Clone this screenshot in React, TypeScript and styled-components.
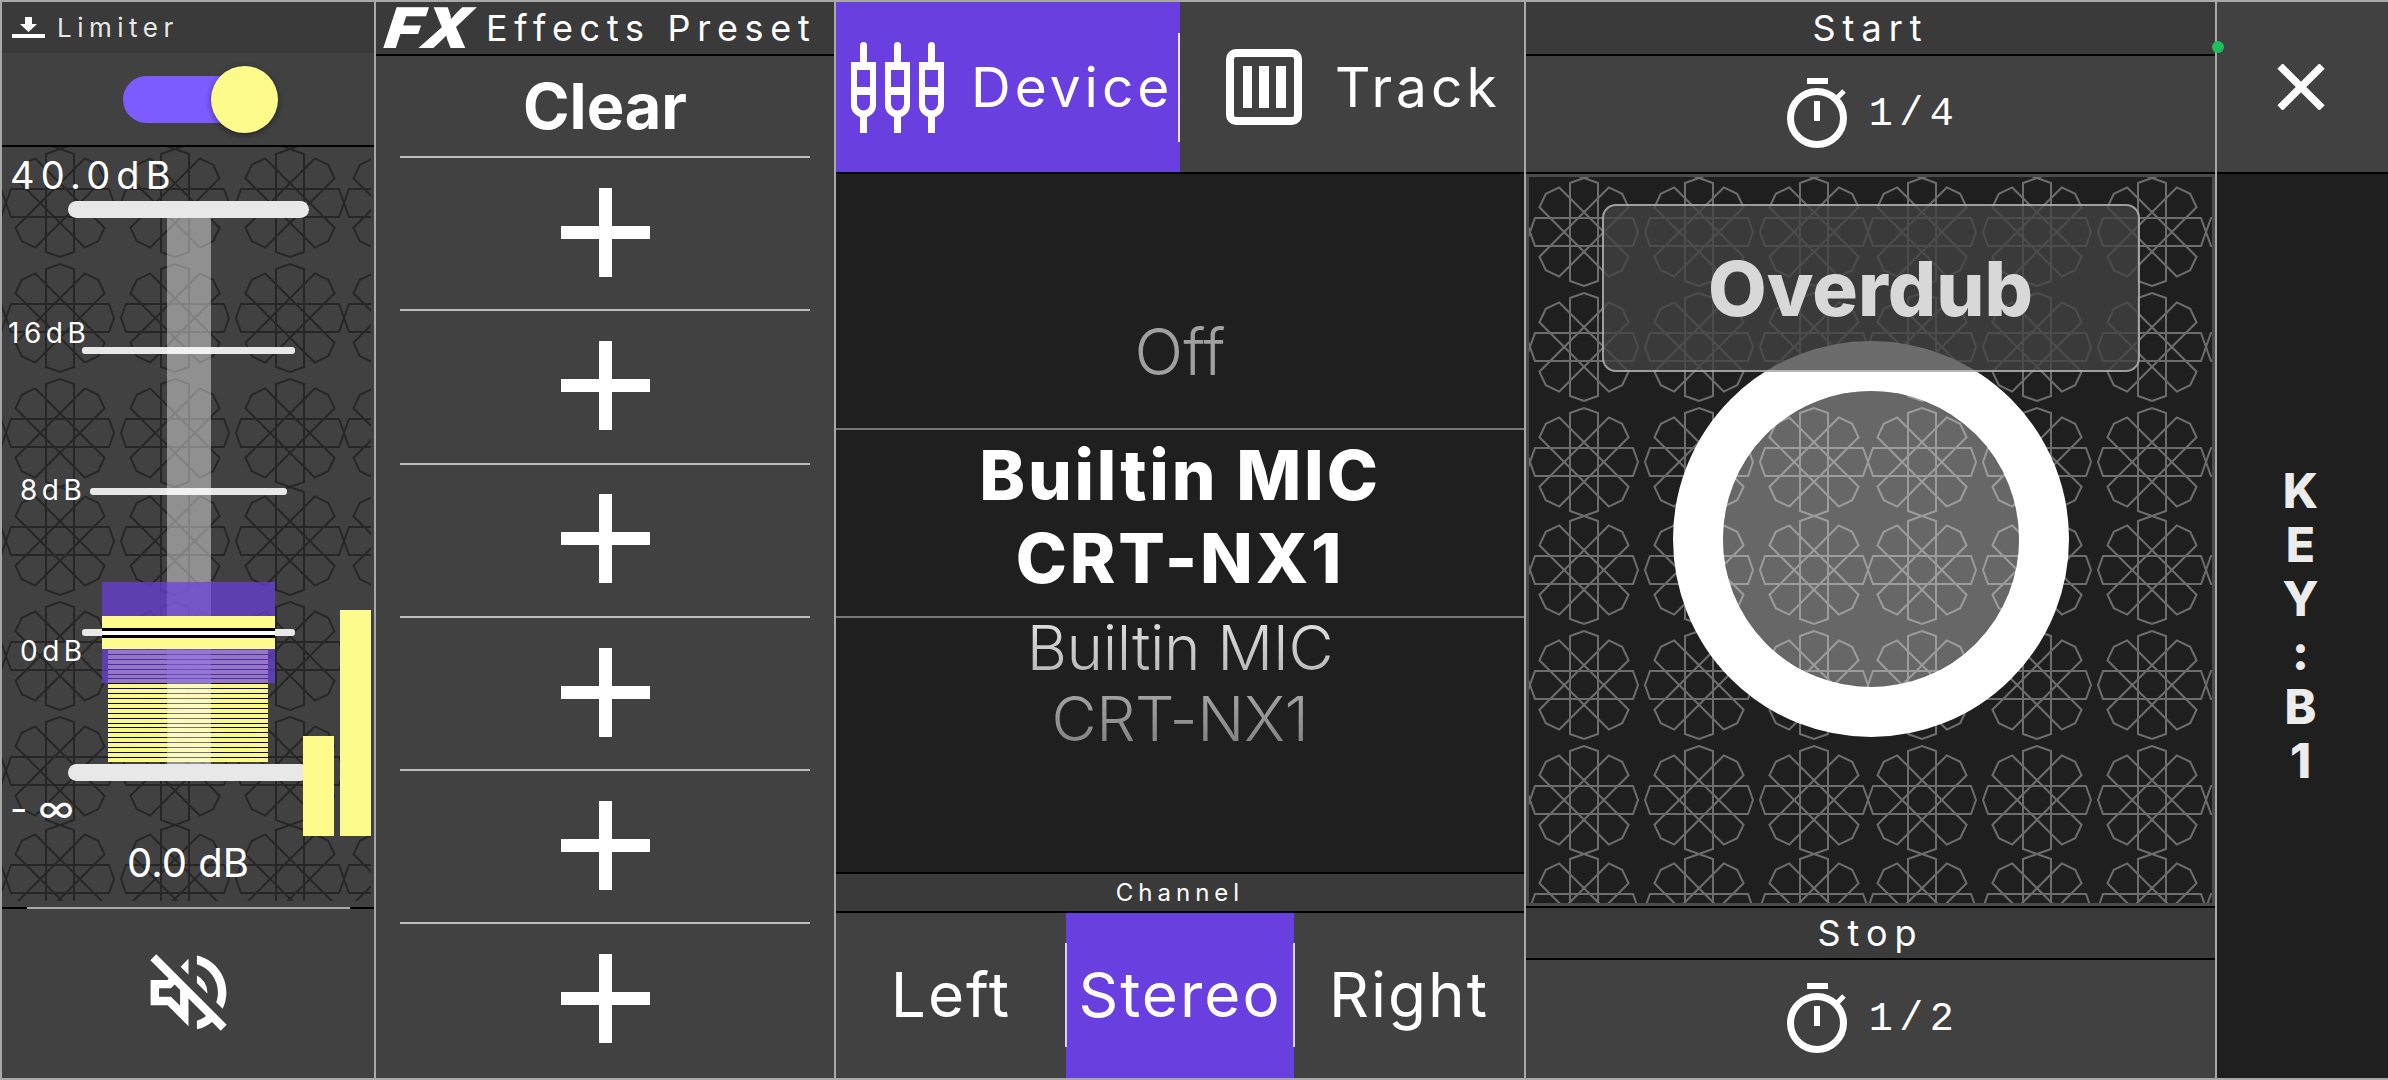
import React from 'react';
import styled, { createGlobalStyle } from 'styled-components';
import { MdOutlineVolumeOff } from 'react-icons/md';

const colors = {
  panel: '#414141',
  header: '#3a3a3a',
  dark: '#1f1f1f',
  rule: '#000',
  edge: '#a8a8a8',
  purple: '#693fe0',
  yellow: '#fdfb8c',
  white: '#fff',
};

// girih tile: flowers sit 115px apart, with a 108px step over the seam
const flowerBar = 'M-14-49L0-54L14-49L14 49L0 54L-14 49Z';
const tileOffsets = [54, 169, 284];

const girih = (stroke: string) => {
  const flower = [0, 45, 90, 135]
    .map((r) => `<path d="${flowerBar}" transform="rotate(${r})"/>`)
    .join('');
  const flowers = tileOffsets
    .flatMap((x) =>
      tileOffsets.map((y) => `<g transform="translate(${x} ${y})">${flower}</g>`)
    )
    .join('');
  const svg = `<svg xmlns="http://www.w3.org/2000/svg" width="338" height="338" fill="none" stroke="${stroke}" stroke-width="2">${flowers}</svg>`;
  return `url("data:image/svg+xml,${encodeURIComponent(svg)}")`;
};

const GlobalStyle = createGlobalStyle`
  html, body {
    margin: 0;
    padding: 0;
    overflow: hidden;
    background: ${colors.edge};
  }
  * {
    box-sizing: border-box;
  }
`;

const Screen = styled.div`
  position: relative;
  width: 2388px;
  height: 1080px;
  padding: 2px 0 2px 2px;
  display: grid;
  grid-template-columns: 372px 458px 688px 689px 171px;
  column-gap: 2px;
  background: ${colors.edge};
  color: ${colors.white};
  font-family: Inter, 'Liberation Sans', sans-serif;
  overflow: hidden;
`;

const Column = styled.section`
  display: flex;
  flex-direction: column;
  min-height: 0;
  background: ${colors.panel};
`;

const Rule = styled.div`
  flex: none;
  height: 2px;
  background: ${colors.rule};
`;

const HeaderBar = styled.header<{ $h: number }>`
  flex: none;
  height: ${(p) => p.$h}px;
  display: flex;
  align-items: center;
  justify-content: center;
  background: ${colors.header};
`;

const LimiterHeader = styled(HeaderBar)`
  justify-content: flex-start;
  padding-left: 10px;
  gap: 12px;
`;

const LimiterTitle = styled.span`
  font-size: 26px;
  letter-spacing: 5.5px;
  font-weight: 400;
  color: #e8e8e8;
`;

const ToggleRow = styled.div`
  flex: none;
  height: 92px;
  display: flex;
  align-items: center;
  justify-content: center;
`;

const ToggleTrack = styled.div`
  position: relative;
  width: 130px;
  height: 47px;
  border-radius: 24px;
  background: #7c5cff;
`;

const ToggleKnob = styled.div`
  position: absolute;
  right: -25px;
  top: -10px;
  width: 67px;
  height: 67px;
  border-radius: 50%;
  background: ${colors.yellow};
  box-shadow: 0 2px 6px rgba(0, 0, 0, 0.45);
`;

const Fader = styled.div`
  position: relative;
  flex: none;
  height: 760px;
  padding: 0 3px 6px 0;
  background-image: ${girih('#262626')};
  background-position: 4px 2px;
  background-clip: content-box;
`;

const FaderLabel = styled.span<{ $x: number; $y: number; $size: number; $ls?: number }>`
  position: absolute;
  left: ${(p) => p.$x}px;
  top: ${(p) => p.$y}px;
  font-size: ${(p) => p.$size}px;
  letter-spacing: ${(p) => p.$ls ?? 0}px;
  line-height: 1;
  white-space: nowrap;
`;

const FaderCap = styled.div<{ $y: number }>`
  position: absolute;
  left: 66px;
  top: ${(p) => p.$y}px;
  width: 241px;
  height: 17px;
  border-radius: 9px;
  background: #e8e8e8;
  z-index: 3;
`;

const FaderTick = styled.div<{ $y: number; $inset: number }>`
  position: absolute;
  left: ${(p) => p.$inset}px;
  right: ${(p) => p.$inset - 1}px;
  top: ${(p) => p.$y}px;
  height: 7px;
  border-radius: 3px;
  background: #e8e8e8;
`;

const Stripes = styled.div`
  position: absolute;
  left: 106px;
  top: 503px;
  width: 160px;
  height: 112px;
  background: repeating-linear-gradient(
    to bottom,
    #fbf88c 0,
    #fbf88c 3.9px,
    rgba(0, 0, 0, 0.8) 3.9px,
    rgba(0, 0, 0, 0.8) 4.9px
  );
`;

const FaderColumn = styled.div`
  position: absolute;
  left: 165px;
  top: 71px;
  width: 44px;
  height: 546px;
  background: rgba(255, 255, 255, 0.42);
`;

const HandleGlass = styled.div`
  position: absolute;
  left: 100px;
  top: 435px;
  width: 173px;
  height: 101px;
  background: rgba(106, 63, 224, 0.7);
`;

const HandleGrip = styled.div`
  position: absolute;
  left: 100px;
  top: 469px;
  width: 173px;
  height: 33px;
  display: flex;
  flex-direction: column;
  justify-content: center;
  background: ${colors.yellow};
`;

const GripLine = styled.div`
  height: 10px;
  border-top: 3px solid #000;
  border-bottom: 3px solid #000;
  background: ${colors.white};
`;

const Meter = styled.div<{ $x: number; $top: number }>`
  position: absolute;
  left: ${(p) => p.$x}px;
  top: ${(p) => p.$top}px;
  width: 31px;
  bottom: 71px;
  background: ${colors.yellow};
  z-index: 4;
`;

const FaderFoot = styled.div`
  flex: none;
  height: 2px;
  display: flex;
  justify-content: center;
  background: ${colors.rule};
`;

const FaderFootLine = styled.div`
  width: 323px;
  background: ${colors.edge};
`;

const MuteRow = styled.div`
  flex: 1;
  display: flex;
  align-items: center;
  justify-content: center;
  padding-bottom: 3px;
  font-size: 101px;
`;

const FxLogo = styled.span`
  flex: none;
  width: 89px;
  font-size: 42px;
  font-weight: 900;
  font-style: italic;
  line-height: 50px;
  transform-origin: left center;
  transform: skewX(-8deg) scale(1.5, 1.33);
`;

const FxHeader = styled(HeaderBar)`
  justify-content: flex-start;
  padding-left: 10px;
  gap: 11px;
`;

const SpacedTitle = styled.span<{ $size: number; $ls: number }>`
  font-size: ${(p) => p.$size}px;
  letter-spacing: ${(p) => p.$ls}px;
  font-weight: 400;
  line-height: 1;
  white-space: nowrap;
`;

const ClearRow = styled.div`
  flex: none;
  height: 100px;
  display: flex;
  align-items: center;
  justify-content: center;
  font-size: 63px;
  font-weight: 700;
`;

const Divider = styled.div`
  flex: none;
  height: 2px;
  margin: 0 24px;
  background: #bdbdbd;
`;

const PlusRow = styled.div`
  flex: none;
  height: 151.3px;
  display: flex;
  align-items: center;
  justify-content: center;
  padding-bottom: 3px;
`;

const Tabs = styled.div`
  flex: none;
  height: 170px;
  display: grid;
  grid-template-columns: 344px 1fr;
`;

const Tab = styled.div<{ $active?: boolean }>`
  position: relative;
  display: flex;
  align-items: center;
  gap: ${(p) => (p.$active ? 27 : 33)}px;
  padding-left: ${(p) => (p.$active ? 15 : 46)}px;
  background: ${(p) => (p.$active ? colors.purple : colors.panel)};
  font-size: 55px;
  font-weight: 400;
  letter-spacing: 4px;
  &::after {
    content: ${(p) => (p.$active ? "''" : 'none')};
    position: absolute;
    right: 0;
    top: 31px;
    height: 109px;
    width: 2px;
    background: #e6e0fa;
  }
`;

const Picker = styled.div`
  flex: 1;
  display: flex;
  flex-direction: column;
  min-height: 0;
  background: ${colors.dark};
`;

const StopAbove = styled.div`
  flex: none;
  height: 254px;
  display: flex;
  align-items: flex-end;
  justify-content: center;
  padding-bottom: 36px;
  font-size: 64px;
  font-weight: 350;
  line-height: 80px;
  color: #a0a0a0;
`;

const StopSelected = styled.div`
  flex: none;
  height: 190px;
  padding-bottom: 12px;
  display: flex;
  flex-direction: column;
  align-items: center;
  justify-content: center;
  border-top: 2px solid #777;
  border-bottom: 2px solid #777;
  font-size: 69px;
  font-weight: 800;
  letter-spacing: 2.8px;
  line-height: 83px;
`;

const StopBelow = styled.div`
  flex: 1;
  display: flex;
  flex-direction: column;
  align-items: center;
  gap: 11px;
  font-size: 62px;
  font-weight: 350;
  letter-spacing: -0.4px;
  line-height: 60px;
`;

const FadedLine = styled.span<{ $from: string; $to: string }>`
  background: linear-gradient(${(p) => p.$from}, ${(p) => p.$to});
  background-clip: text;
  -webkit-background-clip: text;
  color: transparent;
`;

const ChannelRow = styled.div`
  flex: none;
  height: 165px;
  display: grid;
  grid-template-columns: 1fr 228px 1fr;
`;

const ChannelOption = styled.div<{ $active?: boolean }>`
  position: relative;
  display: flex;
  align-items: center;
  justify-content: center;
  padding-bottom: 2px;
  font-size: 62px;
  font-weight: 400;
  letter-spacing: 2px;
  background: ${(p) => (p.$active ? colors.purple : 'transparent')};
  &::before,
  &::after {
    content: ${(p) => (p.$active ? "''" : 'none')};
    position: absolute;
    top: 30px;
    height: 104px;
    width: 2px;
    background: #d9d4ee;
  }
  &::before {
    left: -1px;
  }
  &::after {
    right: -1px;
  }
`;

const TimerRow = styled.div<{ $h?: number }>`
  flex: ${(p) => (p.$h ? 'none' : 1)};
  height: ${(p) => (p.$h ? `${p.$h}px` : 'auto')};
  display: flex;
  align-items: center;
  justify-content: center;
  gap: 21px;
  padding-left: 6px;
  padding-bottom: 3px;
`;

const TimerValue = styled.span`
  margin-top: 3px;
  font-family: 'Liberation Mono', monospace;
  font-size: 40px;
  letter-spacing: 6.500px;
`;

const Stage = styled.div`
  flex: none;
  height: 732px;
  padding: 3px;
  background: #4a4a4a;
`;

const Pad = styled.div`
  height: 100%;
  display: flex;
  flex-direction: column;
  align-items: center;
  padding-top: 27px;
  background-color: ${colors.dark};
  background-image: ${girih('#6d6d6d')};
  background-position: 1px 1px;
`;

const ModeCard = styled.div`
  position: relative;
  z-index: 1;
  flex: none;
  width: 538px;
  height: 168px;
  display: flex;
  align-items: center;
  justify-content: center;
  border: 2px solid rgba(255, 255, 255, 0.5);
  border-radius: 14px;
  background: rgba(66, 66, 66, 0.78);
  color: #d8d8d8;
  font-size: 76px;
  font-weight: 800;
`;

const RecordRing = styled.div`
  flex: none;
  width: 396px;
  height: 396px;
  margin-top: -31px;
  border: 50px solid ${colors.white};
  border-radius: 50%;
  background: rgba(255, 255, 255, 0.32);
  background-clip: padding-box;
`;

const SideColumn = styled(Column)`
  background: ${colors.dark};
`;

const CloseCell = styled.div`
  flex: none;
  height: 170px;
  display: flex;
  align-items: center;
  justify-content: center;
  padding: 0 4px 0 0;
  background: ${colors.panel};
`;

const KeyLabel = styled.div`
  flex: 1;
  display: flex;
  flex-direction: column;
  align-items: center;
  justify-content: center;
  padding-right: 4px;
  color: #ececec;
  font-size: 48px;
  font-weight: 800;
  line-height: 54px;
`;

const StatusDot = styled.div`
  position: absolute;
  left: 2212px;
  top: 41px;
  width: 12px;
  height: 12px;
  border-radius: 50%;
  background: #1dbf5a;
`;

const DownloadIcon = () => (
  <svg width="33" height="21" viewBox="0 0 33 21" fill="#fff">
    <path d="M13 0h7v7h5l-8.500 8L8 7h5z" />
    <rect y="17" width="33" height="4" />
  </svg>
);

const PlusIcon = () => (
  <svg width="89" height="89" viewBox="0 0 89 89" fill="#fff">
    <rect x="38" width="13" height="89" />
    <rect y="38" width="89" height="13" />
  </svg>
);

const sliderBody =
  'M0 20h25v43a12.500 12.500 0 0 1-25 0zM6 28v17h13V28zM6 53v9a6.500 6.500 0 0 0 13 0v-9z';

const SlidersIcon = () => (
  <svg width="93" height="91" viewBox="0 0 93 91" fill="#fff">
    {[0, 34, 68].map((x) => (
      <g key={x} transform={`translate(${x} 0)`}>
        <rect x="9" width="7" height="22" rx="3.500" />
        <path d={sliderBody} fillRule="evenodd" />
        <rect x="9" y="70" width="7" height="21" />
      </g>
    ))}
  </svg>
);

const TrackIcon = () => (
  <svg width="76" height="76" viewBox="0 0 76 76" fill="#fff">
    <rect x="4" y="4" width="68" height="68" rx="6" fill="none" stroke="#fff" strokeWidth="8" />
    <rect x="17" y="17" width="9" height="42" />
    <rect x="33" y="17" width="10" height="42" />
    <rect x="50" y="17" width="10" height="42" />
  </svg>
);

const TimerIcon = () => (
  <svg width="61" height="70" viewBox="0 0 61 70">
    <rect x="20" width="21" height="6" fill="#fff" />
    <circle cx="30" cy="40" r="26.500" fill="none" stroke="#fff" strokeWidth="7" />
    <rect x="27" y="23" width="6" height="20" fill="#fff" />
    <path d="M50 20l7-7" stroke="#fff" strokeWidth="5" />
  </svg>
);

const CloseIcon = () => (
  <svg width="48" height="46" viewBox="0 0 48 46">
    <path d="M3 2l42 42M45 2L3 44" fill="none" stroke="#fff" strokeWidth="7.500" />
  </svg>
);

const plusRows = [1, 2, 3, 4, 5, 6];

const App: React.FC = () => (
  <>
    <GlobalStyle />
    <Screen>
      <Column>
        <LimiterHeader $h={51}>
          <DownloadIcon />
          <LimiterTitle>Limiter</LimiterTitle>
        </LimiterHeader>
        <ToggleRow>
          <ToggleTrack>
            <ToggleKnob />
          </ToggleTrack>
        </ToggleRow>
        <Rule />
        <Fader>
          <FaderLabel $x={8} $y={9} $size={38} $ls={6.2}>40.0dB</FaderLabel>
          <FaderLabel $x={6} $y={172} $size={28} $ls={4.5}>16dB</FaderLabel>
          <FaderLabel $x={18} $y={329} $size={28} $ls={4.5}>8dB</FaderLabel>
          <FaderLabel $x={18} $y={490} $size={28} $ls={4.5}>0dB</FaderLabel>
          <FaderLabel $x={8} $y={642} $size={38}>- ∞</FaderLabel>
          <FaderLabel $x={125} $y={696} $size={40}>0.0 dB</FaderLabel>
          <FaderTick $y={200} $inset={80} />
          <FaderTick $y={341} $inset={88} />
          <FaderTick $y={482} $inset={80} />
          <Stripes />
          <FaderColumn />
          <HandleGlass />
          <HandleGrip>
            <GripLine />
          </HandleGrip>
          <FaderCap $y={54} />
          <FaderCap $y={617} />
          <Meter $x={301} $top={589} />
          <Meter $x={338} $top={463} />
        </Fader>
        <FaderFoot>
          <FaderFootLine />
        </FaderFoot>
        <MuteRow>
          <MdOutlineVolumeOff />
        </MuteRow>
      </Column>

      <Column>
        <FxHeader $h={52}>
          <FxLogo>FX</FxLogo>
          <SpacedTitle $size={36} $ls={6.7}>Effects Preset</SpacedTitle>
        </FxHeader>
        <Rule />
        <ClearRow>Clear</ClearRow>
        {plusRows.map((row) => (
          <React.Fragment key={row}>
            <Divider />
            <PlusRow>
              <PlusIcon />
            </PlusRow>
          </React.Fragment>
        ))}
      </Column>

      <Column>
        <Tabs>
          <Tab $active>
            <SlidersIcon />
            Device
          </Tab>
          <Tab>
            <TrackIcon />
            Track
          </Tab>
        </Tabs>
        <Rule />
        <Picker>
          <StopAbove>Off</StopAbove>
          <StopSelected>
            <span>Builtin MIC</span>
            <span>CRT-NX1</span>
          </StopSelected>
          <StopBelow>
            <FadedLine $from="#e2e2e2" $to="#b4b4b4">Builtin MIC</FadedLine>
            <FadedLine $from="#a6a6a6" $to="#808080">CRT-NX1</FadedLine>
          </StopBelow>
        </Picker>
        <Rule />
        <HeaderBar $h={37}>
          <SpacedTitle $size={24} $ls={5}>Channel</SpacedTitle>
        </HeaderBar>
        <Rule />
        <ChannelRow>
          <ChannelOption>Left</ChannelOption>
          <ChannelOption $active>Stereo</ChannelOption>
          <ChannelOption>Right</ChannelOption>
        </ChannelRow>
      </Column>

      <Column>
        <HeaderBar $h={52}>
          <SpacedTitle $size={36} $ls={7}>Start</SpacedTitle>
        </HeaderBar>
        <Rule />
        <TimerRow $h={116}>
          <TimerIcon />
          <TimerValue>1/4</TimerValue>
        </TimerRow>
        <Rule />
        <Stage>
          <Pad>
            <ModeCard>Overdub</ModeCard>
            <RecordRing />
          </Pad>
        </Stage>
        <Rule />
        <HeaderBar $h={50}>
          <SpacedTitle $size={36} $ls={7}>Stop</SpacedTitle>
        </HeaderBar>
        <Rule />
        <TimerRow>
          <TimerIcon />
          <TimerValue>1/2</TimerValue>
        </TimerRow>
      </Column>

      <SideColumn>
        <CloseCell>
          <CloseIcon />
        </CloseCell>
        <Rule />
        <KeyLabel>
          {'KEY:B1'.split('').map((ch, i) => (
            <span key={i}>{ch}</span>
          ))}
        </KeyLabel>
      </SideColumn>
      <StatusDot />
    </Screen>
  </>
);

export default App;
